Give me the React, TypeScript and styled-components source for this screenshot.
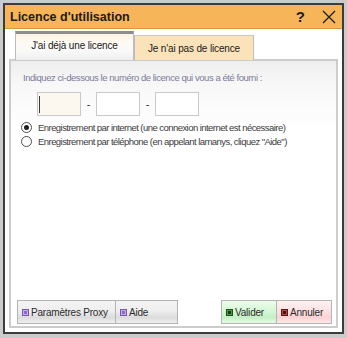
import React from "react";
import styled, { createGlobalStyle } from "styled-components";

const GlobalStyle = createGlobalStyle`
  html, body {
    margin: 0;
    padding: 0;
    background: #ffffff;
  }
  * {
    box-sizing: border-box;
  }
`;

// Window frame
const Frame = styled.div`
  width: 347px;
  height: 338px;
  padding: 3px 3px 4px 3px;
  background: #cbcbcb;
  font-family: "Liberation Sans", Arial, sans-serif;
`;

const Dialog = styled.div`
  height: 100%;
  border: 2px solid #3c3c3c;
  background: #ffffff;
  display: flex;
  flex-direction: column;
`;

const TitleBar = styled.div`
  height: 24px;
  flex-shrink: 0;
  display: flex;
  align-items: center;
  padding: 0 6px 0 5px;
  background: #f6b558;
  border-bottom: 1px solid #d7993f;
`;

const Title = styled.div`
  flex: 1;
  font-size: 12.5px;
  font-weight: bold;
  color: #1b1b1b;
`;

const HelpGlyph = styled.span`
  font-size: 15px;
  font-weight: bold;
  color: #1b1b1b;
  margin-right: 17px;
`;

const Body = styled.div`
  flex: 1;
  display: flex;
  flex-direction: column;
  padding: 3px 4px 4px 4px;
`;

// Tabs
const TabRow = styled.div`
  display: flex;
  align-items: flex-end;
  padding-left: 6px;
  height: 28px;
  position: relative;
  z-index: 1;
  margin-bottom: -1px;
`;

const Tab = styled.div<{ $active?: boolean }>`
  width: ${(p) => (p.$active ? "119px" : "120px")};
  height: ${(p) => (p.$active ? "29px" : "25px")};
  display: flex;
  align-items: center;
  justify-content: center;
  font-size: 10px;
  letter-spacing: -0.15px;
  color: #202020;
  border: 1px solid #bdbdbd;
  border-bottom: none;
  border-top: ${(p) => (p.$active ? "3px solid #8d8d8d" : "1px solid #c9c9c9")};
  background: ${(p) =>
    p.$active
      ? "linear-gradient(to bottom, #fdf2e2 0%, #fefaf4 35%, #f9f9f9 65%, #eeeeee 100%)"
      : "#fbe3b9"};
  padding-bottom: ${(p) => (p.$active ? "4px" : "0")};
`;

const Panel = styled.div`
  flex: 1;
  display: flex;
  flex-direction: column;
  border: 2px solid #cccccc;
  background: linear-gradient(to bottom, #eeeeee 0px, #f8f8f8 25px, #ffffff 70px);
  padding: 11px 4px 2px 6px;
`;

const Hint = styled.div`
  font-size: 9.5px;
  letter-spacing: -0.45px;
  color: #7b7b9b;
  padding-left: 6px;
`;

const KeyRow = styled.div`
  display: flex;
  align-items: center;
  margin: 9px 0 0 20px;
`;

const KeyBox = styled.div<{ $focused?: boolean }>`
  width: 44px;
  height: 24px;
  border: 1px solid #c9c9c9;
  background: ${(p) => (p.$focused ? "#fdf8ef" : "#ffffff")};
  display: flex;
  align-items: center;
  padding-left: 1px;
`;

const Caret = styled.span`
  width: 1px;
  height: 17px;
  background: #3a3a3a;
`;

const Dash = styled.span`
  width: 15px;
  text-align: center;
  font-size: 11px;
  color: #333333;
`;

const RadioList = styled.div`
  display: flex;
  flex-direction: column;
  gap: 3px;
  margin: 6px 0 0 4px;
`;

const RadioRow = styled.label`
  display: flex;
  align-items: center;
  gap: 6px;
  font-size: 9.5px;
  letter-spacing: -0.55px;
  color: #3c3c3c;
`;

const RadioCircle = styled.span<{ $checked?: boolean }>`
  width: 11px;
  height: 11px;
  border-radius: 50%;
  border: 1px solid #4d4d4d;
  background: #ffffff;
  display: flex;
  align-items: center;
  justify-content: center;

  &::after {
    content: "";
    width: 5px;
    height: 5px;
    border-radius: 50%;
    background: ${(p) => (p.$checked ? "#1e1e1e" : "transparent")};
  }
`;

const Spacer = styled.div`
  flex: 1;
`;

// Bottom buttons
const ButtonBar = styled.div`
  display: flex;
  justify-content: space-between;
  padding-right: 0;
`;

const ButtonGroup = styled.div`
  display: flex;
  border: 1px solid #b4b4b4;
`;

const tones = {
  neutral: "linear-gradient(to bottom, #f4f4f4 0%, #eeeeee 45%, #dcdcdc 75%, #efefef 100%)",
  green: "linear-gradient(to bottom, #ecfcec 0%, #d6f7d6 45%, #c4f0c4 75%, #e7fae7 100%)",
  red: "linear-gradient(to bottom, #fff1f1 0%, #fde2e2 45%, #fad2d2 75%, #fdeaea 100%)",
};

const Button = styled.div<{ $tone: keyof typeof tones; $width: number }>`
  width: ${(p) => p.$width}px;
  height: 22px;
  display: flex;
  align-items: center;
  gap: 2px;
  padding-left: 4px;
  font-size: 10px;
  letter-spacing: -0.2px;
  color: #2a2a2a;
  background: ${(p) => tones[p.$tone]};

  & + & {
    border-left: 1px solid #b4b4b4;
  }
`;

const iconColors = {
  purple: { edge: "#7a55b5", fill: "#c3aee6", core: "#8d6bc4" },
  green: { edge: "#1c4f1c", fill: "#4c9a4c", core: "#153d15" },
  red: { edge: "#5c1414", fill: "#b84848", core: "#4a0f0f" },
};

const Bullet = styled.span<{ $color: keyof typeof iconColors }>`
  width: 7px;
  height: 7px;
  border: 1px solid ${(p) => iconColors[p.$color].edge};
  background: ${(p) => iconColors[p.$color].fill};
  display: flex;
  align-items: center;
  justify-content: center;

  &::after {
    content: "";
    width: 3px;
    height: 3px;
    background: ${(p) => iconColors[p.$color].core};
  }
`;

const App: React.FC = () => {
  return (
    <>
      <GlobalStyle />
      <Frame>
        <Dialog>
          <TitleBar>
            <Title>Licence d'utilisation</Title>
            <HelpGlyph>?</HelpGlyph>
            <svg width="14" height="14" viewBox="0 0 14 14">
              <path d="M1 1 L13 13 M13 1 L1 13" stroke="#1b1b1b" strokeWidth="1.3" fill="none" />
            </svg>
          </TitleBar>
          <Body>
            <TabRow>
              <Tab $active>J'ai déjà une licence</Tab>
              <Tab>Je n'ai pas de licence</Tab>
            </TabRow>
            <Panel>
              <Hint>Indiquez ci-dessous le numéro de licence qui vous a été fourni :</Hint>
              <KeyRow>
                <KeyBox $focused>
                  <Caret />
                </KeyBox>
                <Dash>-</Dash>
                <KeyBox />
                <Dash>-</Dash>
                <KeyBox />
              </KeyRow>
              <RadioList>
                <RadioRow>
                  <RadioCircle $checked />
                  Enregistrement par internet (une connexion internet est nécessaire)
                </RadioRow>
                <RadioRow>
                  <RadioCircle />
                  Enregistrement par téléphone (en appelant lamanys, cliquez "Aide")
                </RadioRow>
              </RadioList>
              <Spacer />
              <ButtonBar>
                <ButtonGroup>
                  <Button $tone="neutral" $width={97}>
                    <Bullet $color="purple" />
                    Paramètres Proxy
                  </Button>
                  <Button $tone="neutral" $width={62}>
                    <Bullet $color="purple" />
                    Aide
                  </Button>
                </ButtonGroup>
                <ButtonGroup>
                  <Button $tone="green" $width={54}>
                    <Bullet $color="green" />
                    Valider
                  </Button>
                  <Button $tone="red" $width={55}>
                    <Bullet $color="red" />
                    Annuler
                  </Button>
                </ButtonGroup>
              </ButtonBar>
            </Panel>
          </Body>
        </Dialog>
      </Frame>
    </>
  );
};

export default App;
